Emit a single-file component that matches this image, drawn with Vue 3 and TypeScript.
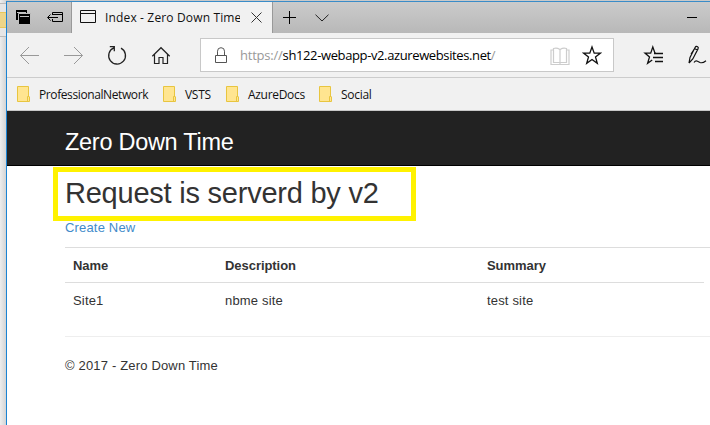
<script setup lang="ts">
interface Bookmark { label: string; cls: string }
interface Site { name: string; description: string; summary: string }

const bookmarks: Bookmark[] = [
  { label: 'ProfessionalNetwork', cls: 'b1' },
  { label: 'VSTS', cls: 'b2' },
  { label: 'AzureDocs', cls: 'b3' },
  { label: 'Social', cls: 'b4' },
]
const sites: Site[] = [{ name: 'Site1', description: 'nbme site', summary: 'test site' }]
</script>

<template>
  <div class="desktop">
    <div class="behind"><div class="behind-tab"></div></div>
    <div class="window">
      <div class="tabbar">
        <div class="tab-tools">
          <svg width="64" height="31" viewBox="0 0 64 31">
            <path d="M9 8h11v10H9z" fill="#000" />
            <path d="M10 10.500h9" stroke="#c4c4c4" />
            <path d="M11.500 11.500h12v11h-12z" fill="#000" stroke="#c0c0c0" />
            <path d="M12 12h11v10H12z" fill="#000" />
            <path d="M13 14.500h9" stroke="#c0c0c0" />
            <path d="M45.500 13V10.500h10v9h-10V17M45 12.500h10M41 15.500h10M43.500 12.500l-3 3 3 3" fill="none" stroke="#000" />
          </svg>
        </div>
        <div class="tab">
          <svg class="page-icon" width="16" height="13" viewBox="0 0 16 13"><path d="M.5.5h15v12H.5zM0 3.500h16" fill="none" stroke="#111" /></svg>
          <span class="tab-title"><span>Index - Zero Down Time</span></span>
          <svg class="close" width="11" height="11" viewBox="0 0 11 11"><path d="M.5.5l10 10M10.500.5l-10 10" stroke="#333" /></svg>
        </div>
        <svg class="plus" width="13" height="13" viewBox="0 0 13 13"><path d="M6.500 0v13M0 6.500h13" stroke="#000" /></svg>
        <svg class="chevron" width="14" height="8" viewBox="0 0 14 8"><path d="M.5.7L7 7 13.500.7" fill="none" stroke="#222" /></svg>
        <div class="minimize"></div>
      </div>

      <div class="toolbar">
        <div class="tool"><svg width="20" height="20" viewBox="0 0 20 20"><path d="M1.500 10.500H20M10 2l-8.500 8.500L10 19" fill="none" stroke="#999" /></svg></div>
        <div class="tool"><svg width="20" height="20" viewBox="0 0 20 20"><path d="M1 10.500h18.500M11 2l8.500 8.500L11 19" fill="none" stroke="#999" /></svg></div>
        <div class="tool"><svg width="20" height="20" viewBox="0 0 20 20"><path d="M14 3.200A8.400 8.400 0 1 1 6.800 2.900M2.800 1.700h4.500v4.600" fill="none" stroke="#222" stroke-width="1.300" /></svg></div>
        <div class="tool"><svg width="20" height="20" viewBox="0 0 20 20"><path d="M1.300 11.200L10 2.700l8.700 8.500M3.500 9.500v9H8v-6h4v6h4.500v-9" fill="none" stroke="#222" stroke-width="1.200" /></svg></div>
        <div class="address">
          <svg class="lock" width="12" height="17" viewBox="0 0 12 17"><path d="M.5 8.500h11v7H.5zM2.500 8.500V4.200a3.500 3.500 0 0 1 7 0v4.300" fill="none" stroke="#555" /></svg>
          <span class="url"><i>https://</i>sh122-webapp-v2.azurewebsites.net<i>/</i></span>
          <svg class="book" width="20" height="19" viewBox="0 0 20 19"><path d="M3.500 3H1v14.500h18V3h-2.500M3.500 1.500q3.500-1 6 .8h1q2.500-1.800 6-.8v14h-13zM10 2v15" fill="none" stroke="#cdcdcd" stroke-width="1.200" /></svg>
          <svg class="star" width="20" height="20" viewBox="0 0 20 20"><path d="M10 2l2.200 6.100h6.300l-5 3.900 1.800 6.300-5.300-3.800-5.300 3.800L6.500 12l-5-3.900h6.300z" fill="none" stroke="#111" stroke-width="1.300" /></svg>
        </div>
        <div class="tool"><svg width="20" height="20" viewBox="0 0 20 20"><path d="M13 8.100h-1L9.800 2 7.700 8.100H2L6.500 12l-1.900 6.300 4.600-3.400M11 8.500h9M10 12.500h10M12 16.500h8" fill="none" stroke="#111" stroke-width="1.300" /></svg></div>
        <div class="tool"><svg width="20" height="20" viewBox="0 0 20 20"><path d="M2 18l1-5.500L8.200 2.300q1-1.500 2.400-.5 1.200.9.4 2.100L5.800 14 2 18M7 4.500L4 9M7.500 3.500l3.200 1.700M7 17.500q1.500-2.200 3.500-1.300l2.500 1.300q2.500 1 6-1.800" fill="none" stroke="#111" stroke-width="1.200" /></svg></div>
      </div>

      <div class="favorites">
        <div v-for="b in bookmarks" :key="b.label" class="bookmark" :class="b.cls">
          <svg width="13" height="16" viewBox="0 0 13 16"><path d="M.5.5h11v9.500l1 1v4.500H.5z" fill="#ffe590" stroke="#e8c53f" /><path d="M10.500 15v-4.500h1.500" fill="none" stroke="#e8c53f" /></svg>
          <span>{{ b.label }}</span>
        </div>
      </div>

      <div class="navbar"><span>Zero Down Time</span></div>

      <main class="page">
        <h2><span>Request is serverd by v2</span></h2>
        <a class="create">Create New</a>
        <div class="table">
          <div class="row head"><b>Name</b><b>Description</b><b>Summary</b></div>
          <div v-for="s in sites" :key="s.name" class="row">
            <span>{{ s.name }}</span><span>{{ s.description }}</span><span>{{ s.summary }}</span>
          </div>
        </div>
        <footer>© 2017 - Zero Down Time</footer>
      </main>
    </div>
  </div>
</template>

<style>
body { margin: 0; overflow: hidden; }
</style>

<style scoped>
* { box-sizing: border-box; }
svg { display: block; flex: none; }
.desktop { display: flex; width: 710px; height: 425px; overflow: hidden; background: #c9c9c9; font-family: "Open Sans", "Noto Sans", sans-serif; font-size: 12px; color: #111; white-space: nowrap; }
.behind { width: 6px; flex: none; background: linear-gradient(90deg, #eee, #d4d4d4); padding-top: 3px; }
.behind-tab { height: 34px; border-top: 1px solid #bbb; border-bottom: 1px solid #bbb; background: linear-gradient(#e6e6e6 8px, #e8c75b 8px, #e8c75b 9px, #edd589 9px, #edd589 23px, #e8c75b 23px, #e8c75b 24px, #e6e6e6 24px); }
.window { width: 704px; flex: none; height: 424px; margin-top: 1px; border-left: 1px solid #1b83d3; border-top: 1px solid #3a8cc8; background: #fff; }
.tabbar { height: 31px; display: flex; background: linear-gradient(#cbcbcb, #b8b8b8); }
.tab-tools { width: 65px; flex: none; border-right: 1px solid #999; }
.tab { width: 201px; flex: none; display: flex; background: #f1f1f1; border-right: 1px solid #999; }
.page-icon { margin: 8px 9px 0 8px; }
.tab-title { width: 135px; height: 31px; line-height: 31px; overflow: hidden; font-size: 12px; letter-spacing: .15px; }
.close { margin: 10px 0 0 11px; }
.plus { margin: 9px 0 0 10px; }
.chevron { margin: 12px 0 0 19px; }
.minimize { width: 10px; height: 1px; background: #000; margin: 15px 13px 0 auto; }
.toolbar { height: 45px; display: flex; background: #f1f1f1; border-bottom: 1px solid #ccc; }
.tool { width: 44px; flex: none; padding: 12px 0 0 12px; }
.address { width: 414px; height: 34px; flex: none; margin: 5px 17px 0; display: flex; background: #fff; border: 1px solid #c8c8c8; }
.lock { margin: 8px 0 0 14px; }
.url { width: 309px; margin-left: 13px; line-height: 32px; font-size: 13px; letter-spacing: -.38px; color: #000; }
.url i { font-style: normal; color: #999; }
.url i:first-child { letter-spacing: -.22px; }
.book { margin: 8px 0 0 1px; }
.star { margin: 6px 0 0 12px; }
.favorites { height: 33px; display: flex; background: #f1f1f1; border-bottom: 1px solid #c8c8c8; padding-left: 10px; letter-spacing: -.3px; }
.bookmark { display: flex; line-height: 34px; }
.bookmark svg { margin: 8px 9px 0 0; }
.b1 { width: 146px; letter-spacing: -.4px; }
.b2 { width: 63px; }
.b3 { width: 93px; }
.navbar { height: 55px; padding-left: 58px; background: #222; border-bottom: 1px solid #000; color: #fff; font: 23.500px/62px "Liberation Sans", Arial, sans-serif; letter-spacing: -.28px; overflow: hidden; }
.page { padding-top: 1px; font: 13px/18px "Liberation Sans", Arial, sans-serif; color: #333; letter-spacing: .17px; }
h2 { width: 363px; height: 54px; margin: 0 0 0 46px; border: 5px solid #fff200; padding-left: 7px; font-size: 29px; font-weight: 400; line-height: 43px; letter-spacing: -.23px; }
.create { display: block; margin-left: 58px; height: 26px; line-height: 14px; color: #428bca; }
.table { margin-left: 58px; border-top: 1px solid #ddd; height: 89px; }
.row { display: grid; grid-template-columns: 152px 262px 1fr; width: 639px; padding-left: 8px; height: 35px; line-height: 36px; }
.head { border-bottom: 1px solid #ddd; letter-spacing: -.05px; }
footer { margin-left: 58px; border-top: 1px solid #eee; line-height: 58px; }
</style>
